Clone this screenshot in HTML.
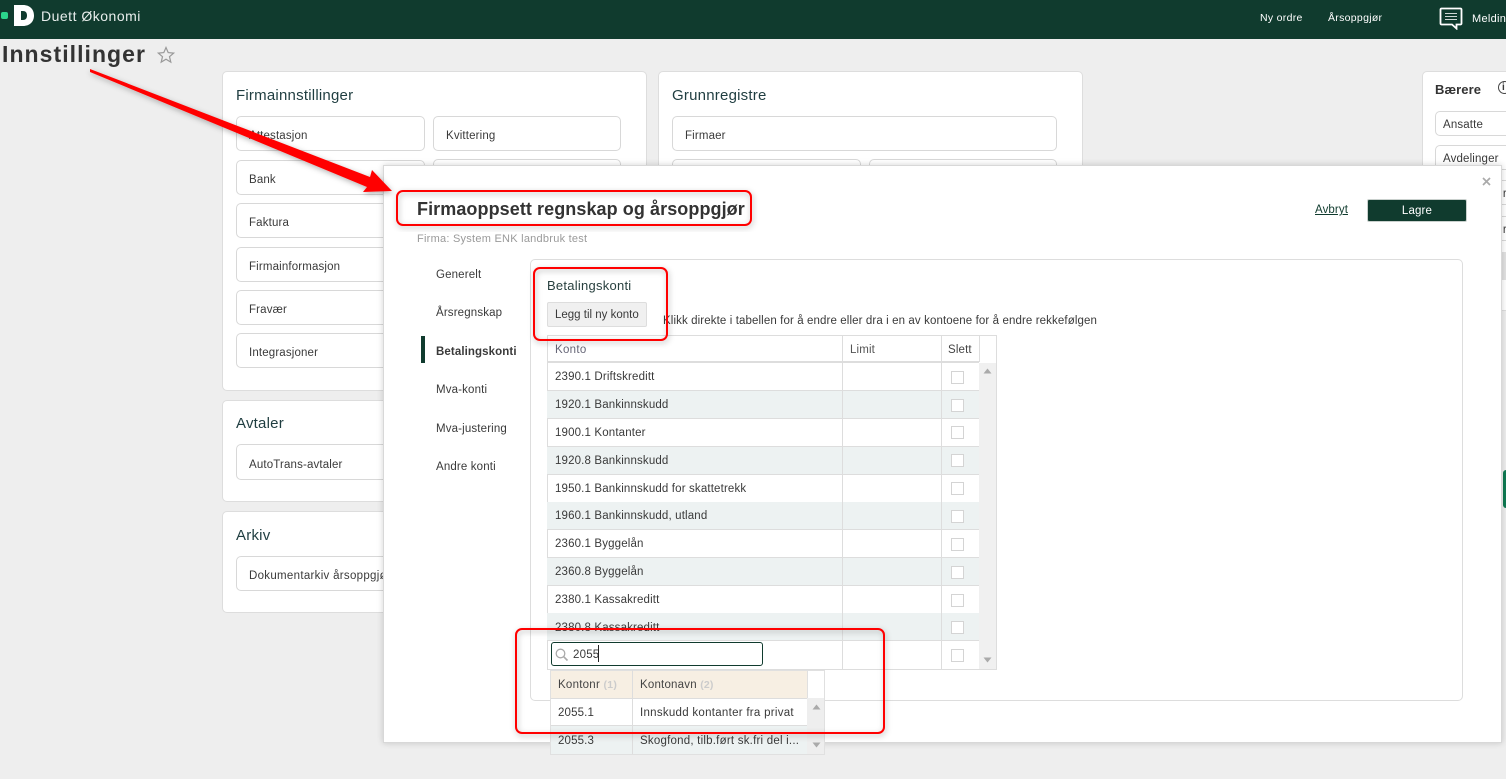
<!DOCTYPE html>
<html><head><meta charset="utf-8"><style>
html,body{margin:0;padding:0}
body{width:1506px;height:779px;overflow:hidden;position:relative;background:#eee;font-family:"Liberation Sans",sans-serif;color:#333}
.a{position:absolute;box-sizing:border-box}
.t{position:absolute;white-space:nowrap;line-height:20px;margin-top:1px;font-size:11.5px;letter-spacing:.15px;color:#3a3a3a}
.card{position:absolute;box-sizing:border-box;background:#fff;border:1px solid #ddd;border-radius:5px}
.btn{position:absolute;box-sizing:border-box;background:#fff;border:1px solid #d8d8d8;border-radius:5px}
.h{font-size:15px;color:#1f3d40;letter-spacing:.22px}
.cb{position:absolute;box-sizing:border-box;width:13px;height:13px;border:1px solid #d4d4d4;background:#fff;left:951px}
.row{position:absolute;left:547px;width:432px;height:28px;box-sizing:border-box;border-bottom:1px solid #ddd}
.v{position:absolute;width:1px;background:#ddd}
</style></head><body>
<!-- header -->
<div class="a" style="left:0;top:0;width:1506px;height:39px;background:#103b2e"></div>
<div class="a" style="left:1px;top:12px;width:7px;height:7px;background:#2bd68c;border-radius:2px"></div>
<svg class="a" style="left:14px;top:5px" width="20" height="21" viewBox="0 0 20 21"><path d="M0 0H9C16 0 20 4.500 20 10.500C20 16.500 16 21 9 21H0ZM7 6V15H9C11.500 15 13 13.500 13 10.500C13 7.500 11.500 6 9 6Z" fill="#fff" fill-rule="evenodd"/></svg>
<div class="t" style="left:41px;top:5px;font-size:14px;color:#e8eeec;letter-spacing:.5px">Duett Økonomi</div>
<div class="t" style="left:1260px;top:7px;font-size:10.5px;color:#fff;letter-spacing:.3px">Ny ordre</div>
<div class="t" style="left:1328px;top:7px;font-size:10.5px;color:#fff;letter-spacing:.3px">Årsoppgjør</div>
<svg class="a" style="left:1439px;top:7px" width="24" height="23" viewBox="0 0 24 23"><path d="M2.500 1.500H21.500C22 1.500 22.500 2 22.500 2.500V16.500C22.500 17 22 17.500 21.500 17.500H17.500V21.500L13 17.500H2.500C2 17.500 1.500 17 1.500 16.500V2.500C1.500 2 2 1.500 2.500 1.500Z" fill="#103b2e" stroke="#fff" stroke-width="1.800"/><path d="M6 6.500H18M6 9.500H18M6 12.500H18" stroke="#cfd8d5" stroke-width="1"/></svg>
<div class="t" style="left:1472px;top:8px;font-size:11px;color:#fff;letter-spacing:.3px">Meldinger</div>
<!-- title -->
<div class="t" style="left:2px;top:43px;font-size:23px;font-weight:bold;letter-spacing:1.05px;color:#333">Innstillinger</div>
<svg class="a" style="left:157px;top:46px" width="18" height="18" viewBox="0 0 18 18"><path d="M9 1.500L11.200 6.600L16.700 7.100L12.500 10.700L13.800 16.100L9 13.200L4.200 16.100L5.500 10.700L1.300 7.100L6.800 6.600Z" fill="none" stroke="#999" stroke-width="1.200"/></svg>
<!-- left cards -->
<div class="card" style="left:222px;top:71px;width:425px;height:320px"></div>
<div class="t h" style="left:236px;top:85px">Firmainnstillinger</div>
<div class="btn" style="left:236px;top:116px;width:189px;height:35px"></div><div class="t" style="left:249px;top:125px">Attestasjon</div>
<div class="btn" style="left:433px;top:116px;width:188px;height:35px"></div><div class="t" style="left:446px;top:125px">Kvittering</div>
<div class="btn" style="left:236px;top:160px;width:189px;height:35px"></div><div class="t" style="left:249px;top:169px">Bank</div>
<div class="btn" style="left:433px;top:159px;width:188px;height:35px"></div>
<div class="btn" style="left:236px;top:203px;width:189px;height:35px"></div><div class="t" style="left:249px;top:212px">Faktura</div>
<div class="btn" style="left:236px;top:247px;width:189px;height:35px"></div><div class="t" style="left:249px;top:256px">Firmainformasjon</div>
<div class="btn" style="left:236px;top:290px;width:189px;height:35px"></div><div class="t" style="left:249px;top:299px">Fravær</div>
<div class="btn" style="left:236px;top:333px;width:189px;height:35px"></div><div class="t" style="left:249px;top:342px">Integrasjoner</div>
<div class="card" style="left:222px;top:400px;width:425px;height:102px"></div>
<div class="t h" style="left:236px;top:413px">Avtaler</div>
<div class="btn" style="left:236px;top:444px;width:189px;height:36px"></div><div class="t" style="left:249px;top:454px">AutoTrans-avtaler</div>
<div class="card" style="left:222px;top:511px;width:425px;height:102px"></div>
<div class="t h" style="left:236px;top:525px">Arkiv</div>
<div class="btn" style="left:236px;top:556px;width:189px;height:35px"></div><div class="t" style="left:249px;top:565px;letter-spacing:.3px">Dokumentarkiv årsoppgjør</div>
<!-- middle card -->
<div class="card" style="left:658px;top:71px;width:425px;height:200px"></div>
<div class="t h" style="left:672px;top:85px">Grunnregistre</div>
<div class="btn" style="left:672px;top:116px;width:385px;height:35px"></div><div class="t" style="left:685px;top:125px">Firmaer</div>
<div class="btn" style="left:672px;top:159px;width:189px;height:35px"></div>
<div class="btn" style="left:869px;top:159px;width:188px;height:35px"></div>
<!-- right card -->
<div class="card" style="left:1422px;top:71px;width:120px;height:240px"></div>
<div class="t" style="left:1435px;top:79px;font-size:13px;font-weight:bold;color:#333;letter-spacing:.1px">Bærere</div>
<div class="a" style="left:1498px;top:81px;width:13px;height:13px;border:1.500px solid #444;border-radius:50%"></div>
<div class="t" style="left:1502px;top:77px;font-size:10px;font-weight:bold">i</div>
<div class="btn" style="left:1435px;top:111px;width:100px;height:25px"></div><div class="t" style="left:1443px;top:114px">Ansatte</div>
<div class="btn" style="left:1435px;top:145px;width:100px;height:25px"></div><div class="t" style="left:1443px;top:148px">Avdelinger</div>
<div class="btn" style="left:1435px;top:180px;width:100px;height:25px"></div><div class="t" style="left:1495px;top:183px">Prosjekter</div>
<div class="btn" style="left:1435px;top:216px;width:100px;height:25px"></div><div class="t" style="left:1495px;top:219px">Prosjekter</div>
<div class="a" style="left:1502px;top:252px;width:4px;height:28px;background:#e2e2e2"></div>
<div class="a" style="left:1503px;top:470px;width:3px;height:38px;background:#0e7a52;border-radius:3px 0 0 3px"></div>
<!-- modal -->
<div class="a" style="left:383px;top:165px;width:1119px;height:578px;background:#fff;border:1px solid #d8d8d8;box-shadow:0 0 6px rgba(0,0,0,.18)"></div>
<div class="t" style="left:417px;top:198px;font-size:18px;font-weight:bold;letter-spacing:.08px;color:#333">Firmaoppsett regnskap og årsoppgjør</div>
<div class="t" style="left:417px;top:228px;font-size:11px;color:#9a9a9a;letter-spacing:.25px">Firma: System ENK landbruk test</div>
<div class="t" style="left:1315px;top:199px;font-size:11.5px;color:#103b2e;text-decoration:underline;letter-spacing:.1px">Avbryt</div>
<div class="a" style="left:1367px;top:199px;width:100px;height:23px;background:#103b2e;border:1px solid #c9d0cd;border-radius:2px"></div>
<div class="t" style="left:1367px;width:100px;text-align:center;top:200px;color:#fff">Lagre</div>
<svg class="a" style="left:1482px;top:177px" width="9" height="9" viewBox="0 0 9 9"><path d="M1 1L8 8M8 1L1 8" stroke="#aaa" stroke-width="1.700"/></svg>
<!-- sidebar -->
<div class="t" style="left:436px;top:264px">Generelt</div>
<div class="t" style="left:436px;top:302px">Årsregnskap</div>
<div class="a" style="left:421px;top:336px;width:4px;height:27px;background:#103b2e"></div>
<div class="t" style="left:436px;top:341px;font-weight:bold;letter-spacing:.1px">Betalingskonti</div>
<div class="t" style="left:436px;top:379px">Mva-konti</div>
<div class="t" style="left:436px;top:418px">Mva-justering</div>
<div class="t" style="left:436px;top:456px">Andre konti</div>
<!-- panel -->
<div class="a" style="left:530px;top:259px;width:933px;height:442px;border:1px solid #ddd;border-radius:5px"></div>
<div class="t" style="left:547px;top:275px;font-size:13px;color:#28403f;letter-spacing:.25px">Betalingskonti</div>
<div class="a" style="left:547px;top:302px;width:100px;height:25px;background:#f0f0f0;border:1px solid #ddd;border-radius:2px"></div>
<div class="t" style="left:555px;top:304px;letter-spacing:0">Legg til ny konto</div>
<div class="t" style="left:663px;top:310px;letter-spacing:.11px">Klikk direkte i tabellen for å endre eller dra i en av kontoene for å endre rekkefølgen</div>
<!-- table -->
<div class="a" style="left:547px;top:335px;width:450px;height:335px;border:1px solid #ddd;background:#fff"></div>
<div class="a" style="left:548px;top:361px;width:431px;height:2px;background:#ddd"></div>
<div class="a" style="left:979px;top:363px;width:17px;height:306px;background:#f0f0f0"></div>
<div class="row" style="top:363px"></div>
<div class="row" style="top:391px;background:#edf2f2"></div>
<div class="row" style="top:419px"></div>
<div class="row" style="top:447px;background:#edf2f2"></div>
<div class="row" style="top:475px"></div>
<div class="row" style="top:502px;background:#edf2f2"></div>
<div class="row" style="top:530px"></div>
<div class="row" style="top:558px;background:#edf2f2"></div>
<div class="row" style="top:586px"></div>
<div class="row" style="top:613px;background:#edf2f2"></div>
<div class="v" style="left:842px;top:335px;height:334px"></div>
<div class="v" style="left:941px;top:335px;height:334px"></div>
<div class="v" style="left:979px;top:335px;height:27px"></div>
<div class="t" style="left:555px;top:339px;color:#667;letter-spacing:.3px">Konto</div>
<div class="t" style="left:850px;top:339px;color:#555">Limit</div>
<div class="t" style="left:948px;top:339px;color:#444">Slett</div>
<div class="t" style="left:555px;top:366px">2390.1 Driftskreditt</div>
<div class="t" style="left:555px;top:394px">1920.1 Bankinnskudd</div>
<div class="t" style="left:555px;top:422px">1900.1 Kontanter</div>
<div class="t" style="left:555px;top:450px">1920.8 Bankinnskudd</div>
<div class="t" style="left:555px;top:478px">1950.1 Bankinnskudd for skattetrekk</div>
<div class="t" style="left:555px;top:505px">1960.1 Bankinnskudd, utland</div>
<div class="t" style="left:555px;top:533px">2360.1 Byggelån</div>
<div class="t" style="left:555px;top:561px">2360.8 Byggelån</div>
<div class="t" style="left:555px;top:589px">2380.1 Kassakreditt</div>
<div class="t" style="left:555px;top:617px">2380.8 Kassakreditt</div>
<div class="cb" style="top:371px"></div><div class="cb" style="top:399px"></div><div class="cb" style="top:426px"></div><div class="cb" style="top:454px"></div><div class="cb" style="top:482px"></div><div class="cb" style="top:510px"></div><div class="cb" style="top:538px"></div><div class="cb" style="top:566px"></div><div class="cb" style="top:594px"></div><div class="cb" style="top:621px"></div><div class="cb" style="top:649px"></div>
<svg class="a" style="left:983px;top:368px" width="9" height="6"><path d="M0.500 5.500H8.500L4.500 0.500Z" fill="#aaa"/></svg>
<svg class="a" style="left:983px;top:657px" width="9" height="6"><path d="M0.500 0.500H8.500L4.500 5.500Z" fill="#aaa"/></svg>
<!-- search -->
<div class="a" style="left:551px;top:642px;width:212px;height:24px;background:#fff;border:1px solid #103b2e;border-radius:3px"></div>
<svg class="a" style="left:555px;top:648px" width="14" height="14" viewBox="0 0 14 14"><circle cx="5.500" cy="5.500" r="4.300" fill="none" stroke="#aaa" stroke-width="1.300"/><path d="M8.700 8.700L12.500 12.500" stroke="#aaa" stroke-width="1.600"/></svg>
<div class="t" style="left:573px;top:644px;letter-spacing:.2px">2055</div>
<div class="a" style="left:598px;top:645px;width:1px;height:17px;background:#222"></div>
<!-- dropdown -->
<div class="a" style="left:550px;top:670px;width:275px;height:85px;background:#fff;border:1px solid #e0e0e0"></div>
<div class="a" style="left:551px;top:671px;width:256px;height:27px;background:#f7efe3"></div>
<div class="a" style="left:551px;top:698px;width:256px;height:28px;background:#fff;border-top:1px solid #ddd;border-bottom:1px solid #ddd"></div>
<div class="a" style="left:551px;top:726px;width:256px;height:28px;background:#edf2f2"></div>
<div class="a" style="left:807px;top:698px;width:17px;height:56px;background:#eee"></div>
<div class="v" style="left:632px;top:670px;height:84px"></div>
<div class="v" style="left:807px;top:670px;height:28px;background:#e0e0e0"></div>
<div class="t" style="left:558px;top:674px;letter-spacing:.25px;color:#444">Kontonr <b style="color:#ccc;font-weight:bold;font-size:10.500px">(1)</b></div>
<div class="t" style="left:640px;top:674px;letter-spacing:.2px;color:#444">Kontonavn <b style="color:#ccc;font-weight:bold;font-size:10.500px">(2)</b></div>
<div class="t" style="left:558px;top:702px">2055.1</div>
<div class="t" style="left:640px;top:702px;letter-spacing:.28px">Innskudd kontanter fra privat</div>
<div class="t" style="left:558px;top:730px">2055.3</div>
<div class="t" style="left:640px;top:730px;letter-spacing:.22px">Skogfond, tilb.ført sk.fri del i...</div>
<svg class="a" style="left:812px;top:704px" width="9" height="6"><path d="M0.500 5.500H8.500L4.500 0.500Z" fill="#aaa"/></svg>
<svg class="a" style="left:812px;top:742px" width="9" height="6"><path d="M0.500 0.500H8.500L4.500 5.500Z" fill="#aaa"/></svg>
<!-- annotations -->
<svg class="a" style="left:0;top:0;overflow:visible" width="1506" height="779">
<defs><filter id="s" x="-10%" y="-20%" width="120%" height="140%"><feDropShadow dx="1" dy="2" stdDeviation="3" flood-color="#000" flood-opacity=".3"/></filter></defs>
<polygon points="90,69 370,177 372,170 392,191 363,192 367,187 90,72" fill="#f00" filter="url(#s)"/>
<rect x="397" y="191" width="354" height="34" rx="6" fill="none" stroke="#f00" stroke-width="2" filter="url(#s)"/>
<rect x="534" y="268" width="133" height="72" rx="6" fill="none" stroke="#f00" stroke-width="2" filter="url(#s)"/>
<rect x="516" y="629" width="368" height="104" rx="6" fill="none" stroke="#f00" stroke-width="2" filter="url(#s)"/>
</svg>
</body></html>
